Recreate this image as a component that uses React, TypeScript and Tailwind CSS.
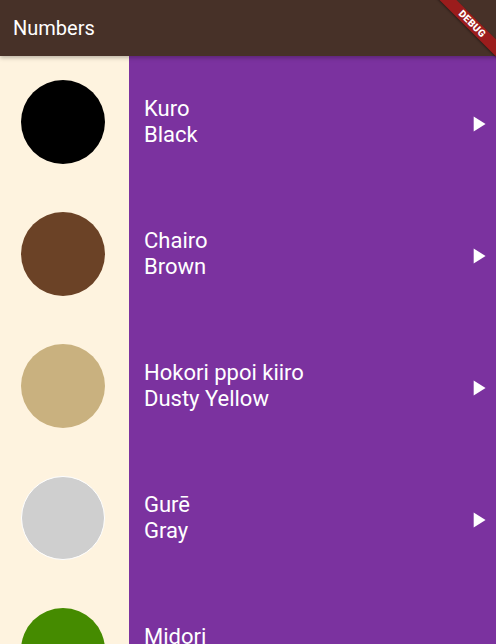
const colours = [
  { jp: "Kuro", en: "Black", swatch: "bg-[#000000]" },
  { jp: "Chairo", en: "Brown", swatch: "bg-[#6b4226]" },
  { jp: "Hokori ppoi kiiro", en: "Dusty Yellow", swatch: "bg-[#c9b17f]" },
  { jp: "Gurē", en: "Gray", swatch: "bg-[#cfcfcf] border border-white" },
  { jp: "Midori", en: "Green", swatch: "bg-[#458b00]" },
];

function PlayArrow() {
  return (
    <svg width="26" height="26" viewBox="0 0 24 24" className="mt-1 mr-[5px] shrink-0">
      <path d="M8 5v14l11-7z" fill="white" />
    </svg>
  );
}

export default function App() {
  return (
    <div
      className="relative h-[644px] w-[496px] overflow-hidden bg-[#fef3df]"
      style={{ fontFamily: "Roboto, 'Liberation Sans', sans-serif" }}
    >
      {/* App bar */}
      <div className="relative z-10 flex h-14 items-center bg-[#473128] pl-[13px] shadow-[0_2px_4px_rgba(0,0,0,0.25)]">
        <h1 className="text-[20px] text-white">Numbers</h1>
      </div>

      {/* List */}
      <div className="flex flex-col">
        {colours.map((c) => (
          <div key={c.en} className="flex h-[132px]">
            <div className="flex w-[129px] shrink-0 items-center bg-[#fef3df] pl-[21px]">
              <div className={`h-[84px] w-[84px] rounded-full ${c.swatch}`}></div>
            </div>
            <div className="flex flex-1 items-center bg-[#7b329f] pl-[15px]">
              <div className="flex-1 text-[22px] leading-[26px] text-white">
                <div>{c.jp}</div>
                <div>{c.en}</div>
              </div>
              <PlayArrow />
            </div>
          </div>
        ))}
      </div>

      {/* Debug banner */}
      <div className="absolute left-[422px] top-[18px] z-20 flex h-3 w-[100px] rotate-45 items-center justify-center bg-[#9b1c1c] shadow-[0_1px_2px_rgba(0,0,0,0.4)]">
        <span className="text-[10px] font-black leading-none tracking-[0.3px] text-white">DEBUG</span>
      </div>
    </div>
  );
}
